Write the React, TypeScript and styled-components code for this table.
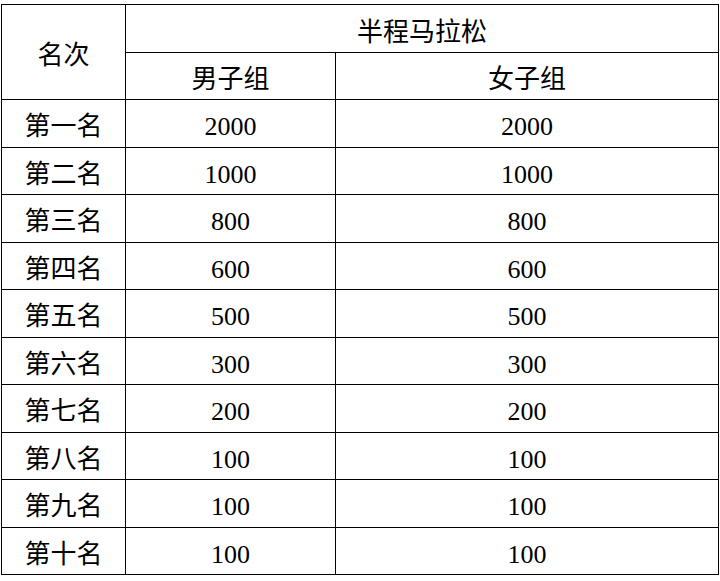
import React from 'react';
import styled, { createGlobalStyle } from 'styled-components';

const GlobalStyle = createGlobalStyle`
	html, body {
		margin: 0;
		padding: 0;
		background: #ffffff;
	}
	body {
		font-family: "Liberation Serif", "Noto Sans CJK SC", serif;
		color: #000000;
	}
`;

const rows = [
	{ rank: '第一名', men: 2000, women: 2000 },
	{ rank: '第二名', men: 1000, women: 1000 },
	{ rank: '第三名', men: 800, women: 800 },
	{ rank: '第四名', men: 600, women: 600 },
	{ rank: '第五名', men: 500, women: 500 },
	{ rank: '第六名', men: 300, women: 300 },
	{ rank: '第七名', men: 200, women: 200 },
	{ rank: '第八名', men: 100, women: 100 },
	{ rank: '第九名', men: 100, women: 100 },
	{ rank: '第十名', men: 100, women: 100 },
];

const App = () => {
	return (
		<Page>
			<GlobalStyle />
			<PrizeTable>
				<colgroup>
					<col style={{ width: '124px' }} />
					<col style={{ width: '210px' }} />
					<col style={{ width: '383px' }} />
				</colgroup>
				<thead>
					<tr>
						<HeadCell rowSpan={2}>名次</HeadCell>
						<HeadCell colSpan={2} $h={48}>半程马拉松</HeadCell>
					</tr>
					<tr>
						<HeadCell $h={47}>男子组</HeadCell>
						<HeadCell $h={47}>女子组</HeadCell>
					</tr>
				</thead>
				<tbody>
					{rows.map((r) => (
						<tr key={r.rank}>
							<Cell>{r.rank}</Cell>
							<Cell>{r.men}</Cell>
							<Cell>{r.women}</Cell>
						</tr>
					))}
				</tbody>
			</PrizeTable>
		</Page>
	);
};

export default App;

const Page = styled.div`
	padding: 4px 0 0 1px;
`;

const PrizeTable = styled.table`
	border-collapse: collapse;
	table-layout: fixed;
	width: 717px;
	font-size: 26px;
	font-family: "Liberation Serif", "Noto Sans CJK SC", serif;
`;

const HeadCell = styled.th<{ $h?: number }>`
	border: 1px solid #000;
	font-weight: 400;
	text-align: center;
	vertical-align: middle;
	height: ${(p) => (p.$h ? `${p.$h - 9}px` : 'auto')};
	padding: 8px 0 0;
	line-height: 30px;
	white-space: nowrap;
`;

const Cell = styled.td`
	border: 1px solid #000;
	text-align: center;
	vertical-align: middle;
	height: 38.5px;
	padding: 8px 0 0;
	line-height: 30px;
	white-space: nowrap;
`;
